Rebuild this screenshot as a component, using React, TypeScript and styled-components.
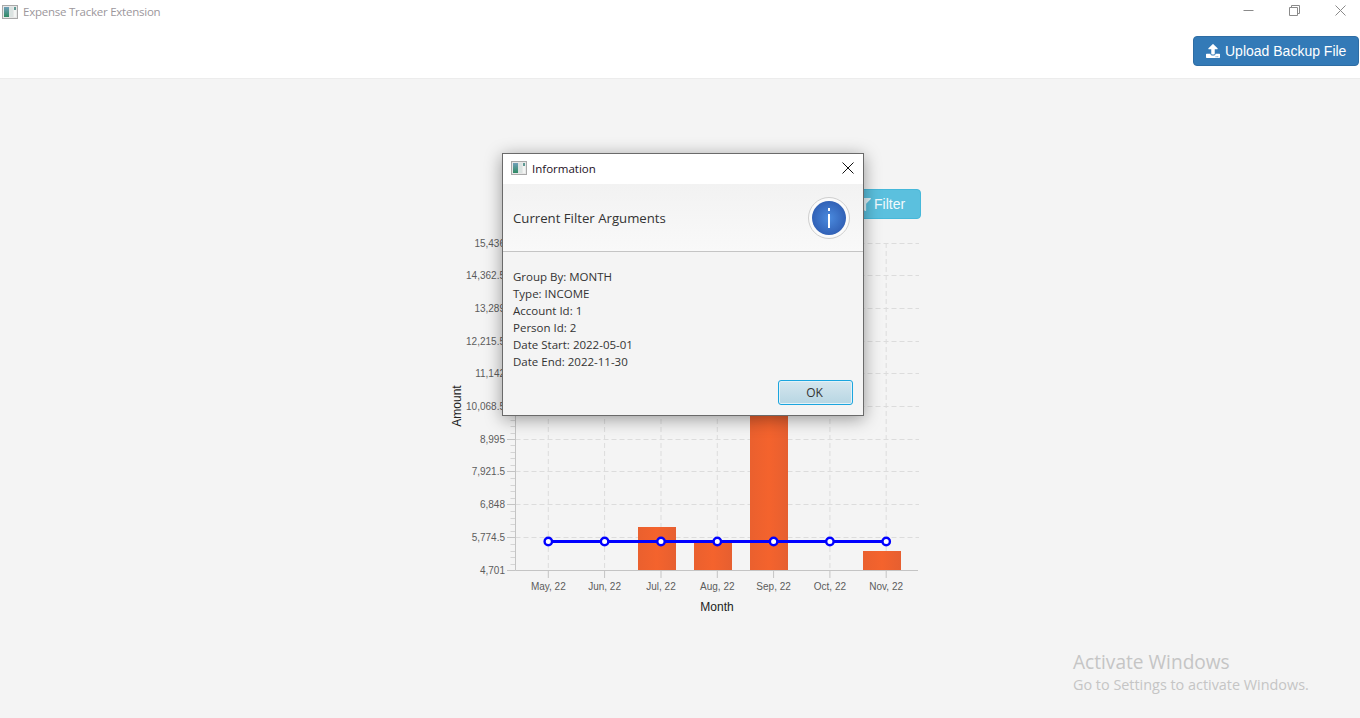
import React from 'react';
import styled, { createGlobalStyle } from 'styled-components';
import { FaFilter, FaUpload } from 'react-icons/fa';

const GlobalStyle = createGlobalStyle`
  html, body {
    margin: 0;
    padding: 0;
    background: #f4f4f4;
  }
  #root {
    height: 718px;
    overflow: hidden;
  }
`;

const UI_FONT = `"Open Sans", "Noto Sans", sans-serif`;
const ARIAL = `"Liberation Sans", Arial, sans-serif`;

const Page = styled.div`
  width: 1360px;
  height: 718px;
  display: flex;
  flex-direction: column;
  position: relative;
  overflow: hidden;
  background: #f4f4f4;
`;

const Header = styled.header`
  height: 78px;
  background: #fff;
  border-bottom: 1px solid #ececec;
  display: flex;
  flex-direction: column;
`;

const TitleBar = styled.div`
  height: 36px;
  display: flex;
  align-items: flex-start;
  padding: 5px 0 0 2px;
  box-sizing: border-box;
`;

const AppTitle = styled.span`
  margin-left: 5px;
  font: 11.5px/14px ${UI_FONT};
  letter-spacing: -0.24px;
  color: #9c979c;
  flex: 1;
`;

const WindowControls = styled.div`
  display: flex;
  padding-right: 14px;
  gap: 35px;
`;

const Toolbar = styled.div`
  display: flex;
  justify-content: flex-end;
  padding-right: 1px;
`;

const UploadButton = styled.button`
  width: 166px;
  height: 30px;
  border: 1px solid #2e6da4;
  border-radius: 4px;
  background: #337ab7;
  color: #fff;
  font: 14px ${ARIAL};
  display: flex;
  align-items: center;
  gap: 5px;
  padding: 0 0 0 12px;
  box-sizing: border-box;
`;

const Main = styled.main`
  flex: 1;
  padding: 110px 0 0 441px;
`;

const ChartColumn = styled.section`
  width: 480px;
  display: flex;
  flex-direction: column;
`;

const FilterRow = styled.div`
  display: flex;
  justify-content: flex-end;
  height: 36px;
`;

const FilterButton = styled.button`
  width: 72px;
  height: 30px;
  border: 1px solid #46b8da;
  border-radius: 4px;
  background: #5bc0de;
  color: #f2fafd;
  font: 14px ${ARIAL};
  display: flex;
  align-items: center;
  gap: 3px;
  padding: 0 0 0 8px;
  box-sizing: border-box;
`;

const ChartSvg = styled.svg`
  display: block;
  width: 480px;
  height: 395px;
`;

const TickLabel = styled.text`
  font: 10px ${ARIAL};
  fill: #5c5c5c;
`;

const AxisTitle = styled.text`
  font: 12px ${ARIAL};
  fill: #222;
`;

const Dialog = styled.div`
  position: absolute;
  left: 502px;
  top: 153px;
  width: 362px;
  height: 263px;
  box-sizing: border-box;
  border: 1px solid #6a6a6a;
  background: #f4f4f4;
  box-shadow: 0 3px 16px rgba(0, 0, 0, 0.38);
  display: flex;
  flex-direction: column;
  font-family: ${UI_FONT};
`;

const DialogTitleBar = styled.div`
  height: 30px;
  box-sizing: border-box;
  background: #fff;
  display: flex;
  align-items: center;
  padding: 0 9px 2px 8px;
  flex-shrink: 0;
`;

const DialogTitle = styled.span`
  flex: 1;
  margin-left: 5px;
  font-size: 11.5px;
  color: #1c0f24;
`;

const DialogHeader = styled.div`
  height: 68px;
  flex-shrink: 0;
  box-sizing: border-box;
  border-bottom: 1px solid #c4c4c4;
  background: linear-gradient(#f2f2f2, #f9f9f9);
  display: flex;
  align-items: center;
  justify-content: space-between;
  padding: 0 12px 0 10px;
`;

const HeaderText = styled.span`
  font-size: 13.2px;
  color: #333;
`;

const DialogBody = styled.div`
  flex: 1;
  padding: 16px 10px 0;
`;

const InfoLine = styled.div`
  font-size: 11.5px;
  line-height: 17px;
  color: #333;
`;

const DialogFooter = styled.div`
  display: flex;
  justify-content: flex-end;
  padding: 0 10px 10px;
`;

const OkButton = styled.button`
  width: 75px;
  height: 25px;
  border: 1px solid #1ba5de;
  border-radius: 3px;
  background: linear-gradient(#d5e6ee, #b7d6e3);
  box-shadow: inset 0 0 0 1px #e3f2f8;
  font: 12px ${UI_FONT};
  color: #333;
  padding: 0 2px 0 0;
`;

const Watermark = styled.aside`
  position: absolute;
  left: 1073px;
  top: 649px;
  color: #c5c5c5;
  font-family: ${UI_FONT};
`;

const WatermarkTitle = styled.div`
  font-size: 19.1px;
  line-height: 26px;
`;

const WatermarkText = styled.div`
  font-size: 14.4px;
  line-height: 20px;
`;

const AppIcon = () => (
  <svg width="16" height="14" viewBox="0 0 16 14">
    <defs>
      <linearGradient id="appIconFill" x1="0" y1="0" x2="0" y2="1">
        <stop offset="0" stopColor="#6f9fb8" />
        <stop offset="1" stopColor="#2f8a63" />
      </linearGradient>
    </defs>
    <rect x="0.5" y="0.5" width="15" height="13" fill="#e8e8e8" stroke="#a9a9a9" />
    <rect x="2" y="2" width="5" height="10" fill="url(#appIconFill)" />
    <rect x="7" y="2" width="4" height="10" fill="#dbe3e1" />
    <rect x="12" y="2" width="2" height="3" fill="#5f9a94" />
    <rect x="12" y="5" width="2" height="7" fill="#f2f5f3" />
  </svg>
);

const WindowButtons = () => (
  <WindowControls>
    <svg width="11" height="12" viewBox="0 0 11 12">
      <path d="M0.5 5.5H10.5" stroke="#8a8a8a" fill="none" />
    </svg>
    <svg width="11" height="12" viewBox="0 0 11 12">
      <path d="M0.5 2.5H8.5V10.5H0.5Z M2.5 2.5V0.5H10.5V8.5H8.5" stroke="#8a8a8a" fill="none" />
    </svg>
    <svg width="11" height="12" viewBox="0 0 11 12">
      <path d="M0.5 0.5L10.5 10.5M10.5 0.5L0.5 10.5" stroke="#8a8a8a" fill="none" />
    </svg>
  </WindowControls>
);

const InfoIcon = () => (
  <svg width="44" height="44" viewBox="0 0 44 44">
    <defs>
      <radialGradient id="infoFill" cx="0.5" cy="0.5" r="0.55">
        <stop offset="0" stopColor="#4a8ade" />
        <stop offset="1" stopColor="#2f5db2" />
      </radialGradient>
    </defs>
    <circle cx="22" cy="22" r="20.5" fill="#fbfbfb" stroke="#cfcfcf" />
    <circle cx="22" cy="22" r="17" fill="url(#infoFill)" />
    <rect x="21" y="12" width="2" height="3" fill="#fff" />
    <rect x="21" y="18" width="2" height="14" fill="#fff" />
  </svg>
);

const yLabels = ['4,701', '5,774.5', '6,848', '7,921.5', '8,995', '10,068.5', '11,142', '12,215.5', '13,289', '14,362.5', '15,436'];
const months = ['May, 22', 'Jun, 22', 'Jul, 22', 'Aug, 22', 'Sep, 22', 'Oct, 22', 'Nov, 22'];
const monthX = [548.3, 604.6, 661, 717.3, 773.6, 829.9, 886.2];
const bars = [
  { x: 638, top: 527 },
  { x: 694, top: 543 },
  { x: 750, top: 380 },
  { x: 863, top: 551 },
];

const BASE_Y = 570;
const STEP_Y = 32.7;
const AXIS_X = 515.5;
const LINE_Y = 541.5;

const Chart = () => (
  <ChartSvg viewBox="441 225 480 395">
    <defs>
      <linearGradient id="barFill" x1="0" y1="0" x2="1" y2="0">
        <stop offset="0" stopColor="#ea602e" />
        <stop offset="0.5" stopColor="#f4632d" />
        <stop offset="1" stopColor="#e65f30" />
      </linearGradient>
    </defs>

    {yLabels.map((label, i) => {
      const y = Math.floor(BASE_Y - i * STEP_Y) + 0.5;
      return (
        <g key={label}>
          {i > 0 && <path d={`M${AXIS_X} ${y}H919`} stroke="#dcdcdc" strokeDasharray="5 3" />}
          <path d={`M507 ${y}H${AXIS_X}`} stroke="#c4c4c4" />
          <TickLabel x="505" y={y + 3.5} textAnchor="end">{label}</TickLabel>
          {i < 10 && [1, 2, 3, 4].map((m) => (
            <path
              key={m}
              d={`M510.5 ${Math.round(y - (m * STEP_Y) / 5) + 0.5}H${AXIS_X}`}
              stroke="#d4d4d4"
            />
          ))}
        </g>
      );
    })}

    {monthX.map((x, i) => (
      <g key={months[i]}>
        <path d={`M${x} 243V570.5`} stroke="#dcdcdc" strokeDasharray="5 3" />
        <path d={`M${x} 570.5V578`} stroke="#c4c4c4" />
        <TickLabel x={x} y="590" textAnchor="middle">{months[i]}</TickLabel>
      </g>
    ))}

    {bars.map((bar) => (
      <rect key={bar.x} x={bar.x} y={bar.top} width="38" height={570 - bar.top} fill="url(#barFill)" />
    ))}

    <path d={`M${AXIS_X} 243V570.5H918`} stroke="#c4c4c4" fill="none" />

    <path d={`M${monthX[0]} ${LINE_Y}H${monthX[6]}`} stroke="#0000ff" strokeWidth="3" />
    {monthX.map((x) => (
      <circle key={x} cx={x} cy={LINE_Y} r="3.7" fill="#fff" stroke="#0000ff" strokeWidth="2.4" />
    ))}

    <AxisTitle x="717" y="611" textAnchor="middle">Month</AxisTitle>
    <AxisTitle transform="translate(461 406) rotate(-90)" textAnchor="middle">Amount</AxisTitle>
  </ChartSvg>
);

const filterInfo = [
  'Group By: MONTH',
  'Type: INCOME',
  'Account Id: 1',
  'Person Id: 2',
  'Date Start: 2022-05-01',
  'Date End: 2022-11-30',
];

export default function App() {
  return (
    <Page>
      <GlobalStyle />
      <Header>
        <TitleBar>
          <AppIcon />
          <AppTitle>Expense Tracker Extension</AppTitle>
          <WindowButtons />
        </TitleBar>
        <Toolbar>
          <UploadButton>
            <FaUpload size={14} />
            Upload Backup File
          </UploadButton>
        </Toolbar>
      </Header>

      <Main>
        <ChartColumn>
          <FilterRow>
            <FilterButton>
              <FaFilter size={13} color="#e4f4f9" />
              Filter
            </FilterButton>
          </FilterRow>
          <Chart />
        </ChartColumn>
      </Main>

      <Dialog>
        <DialogTitleBar>
          <AppIcon />
          <DialogTitle>Information</DialogTitle>
          <svg width="12" height="12" viewBox="0 0 12 12">
            <path d="M0.5 0.5L11.5 11.5M11.5 0.5L0.5 11.5" stroke="#111" fill="none" />
          </svg>
        </DialogTitleBar>
        <DialogHeader>
          <HeaderText>Current Filter Arguments</HeaderText>
          <InfoIcon />
        </DialogHeader>
        <DialogBody>
          {filterInfo.map((line) => (
            <InfoLine key={line}>{line}</InfoLine>
          ))}
        </DialogBody>
        <DialogFooter>
          <OkButton>OK</OkButton>
        </DialogFooter>
      </Dialog>

      <Watermark>
        <WatermarkTitle>Activate Windows</WatermarkTitle>
        <WatermarkText>Go to Settings to activate Windows.</WatermarkText>
      </Watermark>
    </Page>
  );
}
